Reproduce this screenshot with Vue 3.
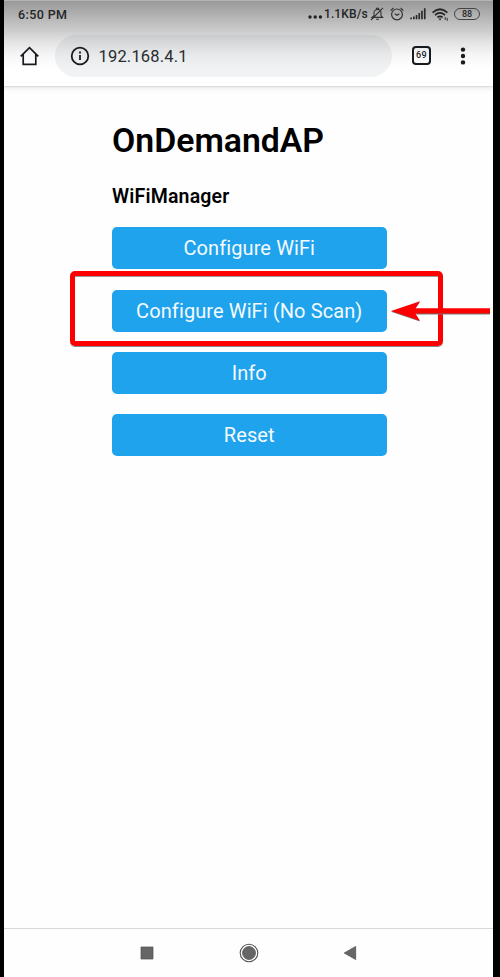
<script setup>
const actions = ['Configure WiFi', 'Configure WiFi (No Scan)', 'Info', 'Reset']
</script>

<template>
  <div class="frame">
    <div class="phone">
      <header class="top">
        <div class="status">
          <span class="time">6:50 PM</span>
          <svg class="dots" width="15" height="4" viewBox="0 0 15 4"><circle cx="2" cy="2" r="1.7" /><circle cx="7.2" cy="2" r="1.7" /><circle cx="12.4" cy="2" r="1.7" /></svg>
          <span class="speed">1.1KB/s</span>
          <svg class="bell" width="14" height="14" viewBox="0 0 14 14" fill="none" stroke="#333" stroke-width="1.1">
            <path d="M2 10.4h10.6L11 8.7V5.8C11 3.6 9.4 2.5 7.5 2.5S4 3.6 4 5.8v2.9zM6.4 2.4V1.3h2.2v1.1M6 12.2h3M1 13 13 .8" />
          </svg>
          <svg class="alarm" width="14" height="14" viewBox="0 0 14 14" fill="none" stroke="#333" stroke-width="1.2">
            <circle cx="7" cy="7.4" r="5.4" /><path d="M.6 3.6 3.4 1M13.4 3.6 10.6 1M4.6 6.7 7 8.3l2.4-1.6" />
          </svg>
          <svg class="signal" width="17" height="12" viewBox="0 0 17 12" fill="#2b2b2b">
            <path d="M.2 9.6h1.7v1.7H.2zM3 8.5h1.7v2.8H3zM5.7 6.9h1.7v4.4H5.7zM8.4 5h1.7v6.3H8.4zM11.1 2.8h1.7v8.5h-1.7zM13.9.3h1.7v11h-1.7z" />
          </svg>
          <svg class="wifi" width="17" height="13" viewBox="0 0 17 13" fill="none" stroke="#222" stroke-width="1.7">
            <path d="M.6 4.7Q8 -2.2 15.4 4.7M3 7.1q5-4.3 10 0M5.4 9.4q2.6-2.2 5.2 0" />
            <path d="M6.4 10.6h3.2L8 12.4z" fill="#222" stroke="none" /><path d="M13.2 9v3M15.2 9.8v3" stroke-width=".9" />
          </svg>
          <span class="battery">88</span>
        </div>
        <div class="toolbar">
          <svg class="home" width="20" height="20" viewBox="0 0 20 20" fill="none" stroke="#171b20" stroke-width="1.7">
            <path d="M.7 10.3 9.5 1.6l8.8 8.7M3.2 8.5v9.8h12.6V8.5" />
          </svg>
          <div class="address">
            <svg width="20" height="20" viewBox="0 0 20 20" fill="none" stroke="#171b20" stroke-width="1.8">
              <circle cx="10" cy="10" r="8.3" /><path d="M10 9v5M10 5.6v1.9" />
            </svg>
            <span>192.168.4.1</span>
          </div>
          <span class="tabs">69</span>
          <svg class="more" width="6" height="20" viewBox="0 0 6 20" fill="#171b20"><circle cx="3" cy="3.6" r="2.2" /><circle cx="3" cy="10" r="2.2" /><circle cx="3" cy="16.4" r="2.2" /></svg>
        </div>
      </header>

      <main class="page">
        <h1>OnDemandAP</h1>
        <h3>WiFiManager</h3>
        <div class="actions">
          <button v-for="action in actions" :key="action" type="button">{{ action }}</button>
        </div>
      </main>

      <nav class="navbar">
        <svg width="14" height="14" viewBox="0 0 14 14"><path d="M1 1h12v12H1z" fill="#666" stroke="#4d4d4d" stroke-width=".7" /></svg>
        <svg width="20" height="20" viewBox="0 0 20 20"><circle cx="10" cy="10" r="8.8" fill="none" stroke="#555" stroke-width="1.1" /><circle cx="10" cy="10" r="6.5" fill="#666" stroke="#4d4d4d" stroke-width=".7" /></svg>
        <svg width="14" height="16" viewBox="0 0 14 16"><path d="M12.7 1.4v13.2L1.2 8z" fill="#666" stroke="#4d4d4d" stroke-width=".7" /></svg>
      </nav>
    </div>

    <div class="highlight"></div>
    <svg class="arrow" width="102" height="24" viewBox="0 0 102 24">
      <path d="M2 12 31 2.2 26.3 9.2H101v5.4H26.3L31 21.8z" fill="#777" transform="translate(0 .8)" />
      <path d="M2 12 31 2.2 26.3 9.2H101v5.4H26.3L31 21.8z" fill="#fe0000" />
    </svg>
  </div>
</template>

<style>
body { margin: 0; background: #000; }
</style>

<style scoped>
* { box-sizing: border-box; }
svg { display: block; flex: none; }
.frame {
  position: relative;
  width: 500px;
  height: 977px;
  padding: 0 7px 0 4px;
  background: #000;
  font-family: Roboto, sans-serif;
  overflow: hidden;
}
.phone { height: 977px; display: flex; flex-direction: column; background: #fefefe; overflow: hidden; }
.top {
  height: 86px;
  flex: none;
  border-top: 1px solid #b4b5b4;
  background: linear-gradient(#999 0, #b1b1b1 14px, #c9c9c9 28px, #e5e5e5 42px, #f7f7f7 55px, #fff 68px);
  box-shadow: 0 1px 1px #ddd, 0 2px 5px #e8e8e8;
}
.status { height: 26px; display: flex; align-items: center; padding-left: 14px; color: #252525; }
.time { width: 290px; font-size: 12.5px; font-weight: 500; letter-spacing: .4px; }
.dots { margin-top: 5px; margin-right: 1px; fill: #222; }
.speed { width: 46px; font-size: 12px; font-weight: 500; letter-spacing: .1px; white-space: nowrap; }
.alarm { margin-left: 6px; }
.signal { margin-left: 6px; }
.wifi { margin-left: 5px; }
.battery {
  width: 26px; height: 12px; margin-left: 5px;
  border: 1px solid #444; border-radius: 6px;
  font-size: 9px; font-weight: 500; line-height: 10px; text-align: center;
}
.toolbar { height: 57px; display: flex; align-items: center; padding-left: 16px; }
.home { margin-right: 15px; }
.address {
  width: 337px; height: 42px; margin-right: 20px;
  display: flex; align-items: center; gap: 8.5px; padding-left: 15px;
  border-radius: 21px; background: rgba(30, 60, 80, .065);
  color: #292b2d; font-size: 16.5px; letter-spacing: .18px;
}
.address span { padding-top: 2px; }
.tabs {
  width: 19px; height: 19px; margin-right: 29px;
  border: 2px solid #171b20; border-radius: 4px;
  font-size: 9px; font-weight: 500; line-height: 15px; text-align: center; letter-spacing: .4px; color: #171b20;
}
.page { flex: 1; padding: 35px 0 0 108px; color: #000; }
h1 { margin: 0; font-size: 33.8px; line-height: 40px; font-weight: 600; }
h3 { margin: 24px 0 0; font-size: 19.5px; line-height: 24px; font-weight: 600; letter-spacing: .18px; }
.actions { width: 274.5px; margin-top: 18.4px; display: grid; row-gap: 20.2px; }
button {
  height: 42.1px; padding: 1px 0 0; border: 0; border-radius: 5px;
  background: #1fa3ec; color: #f5faff;
  font: 400 20px/41.4px Roboto, sans-serif; letter-spacing: .1px;
}
.navbar {
  height: 49px; flex: none; border-top: 1px solid #d8d8d8;
  display: flex; align-items: center; justify-content: center; gap: 84.5px;
}
.highlight {
  position: absolute; left: 70px; top: 271px; width: 373px; height: 75px;
  border: 5px solid #fe0000; border-radius: 5px;
  box-shadow: 0 1px 0 #888, inset 0 1px 0 #999;
}
.arrow { position: absolute; left: 389px; top: 299px; }
</style>
